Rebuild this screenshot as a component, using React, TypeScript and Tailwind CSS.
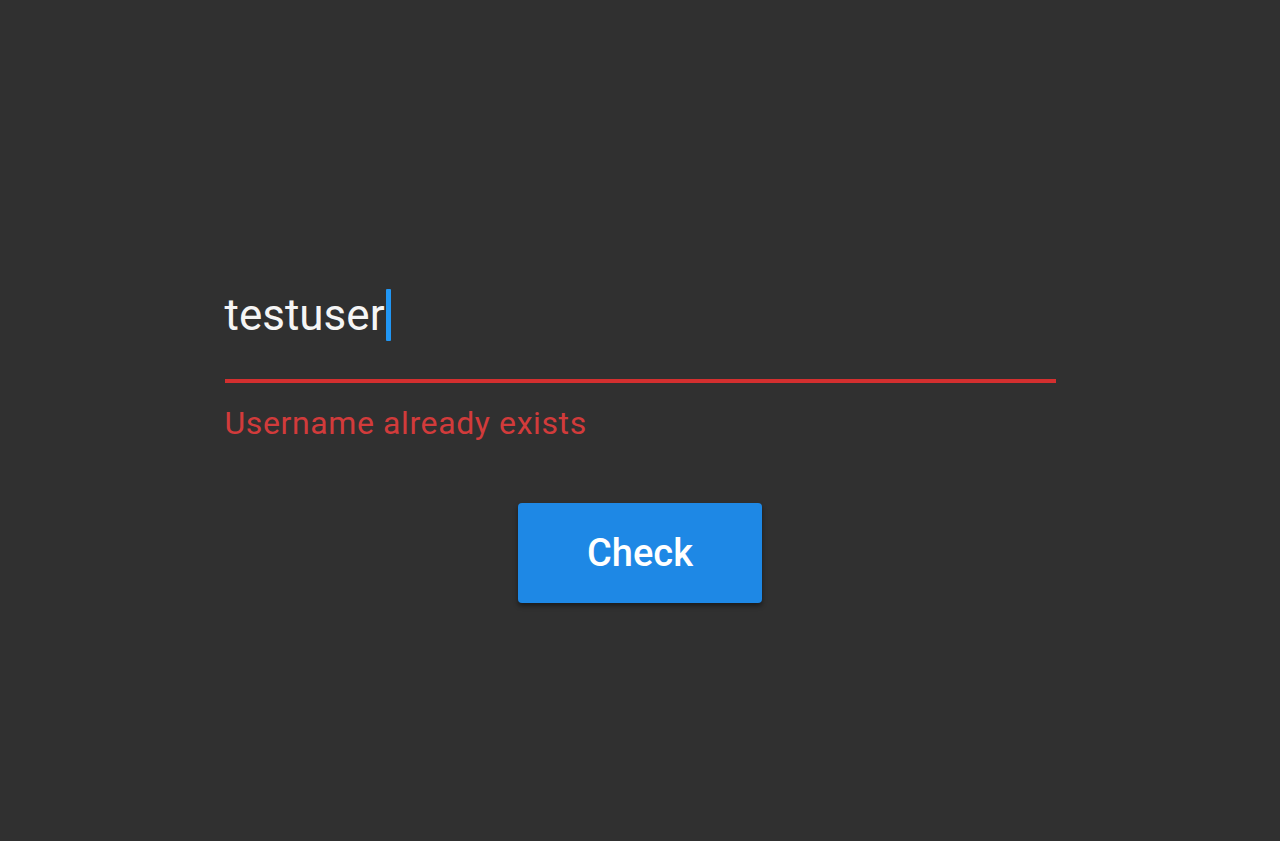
export default function App() {
  return (
    <div className="flex min-h-[841px] w-full flex-col bg-[#303030] font-['Roboto',sans-serif]">
      <div className="mx-auto mt-[284px] w-[831px]">
        <div className="flex h-[62px] items-center">
          <span className="text-[44px] leading-none text-[#f5f5f5]">testuser</span>
          <span className="ml-[1px] h-[52px] w-[5px] rounded-[1px] bg-[#2196f3]" />
        </div>
        <div className="mt-[33px] h-[4px] w-full bg-[#d32f2f]" />
        <div className="mt-[24px] text-[32px] leading-none tracking-[0.6px] text-[#d23b3b]">
          Username already exists
        </div>
      </div>
      <div className="mt-[64px] flex justify-center">
        <button className="h-[100px] w-[244px] rounded-[4px] bg-[#1e88e5] text-[38px] font-medium text-white shadow-[0_3px_5px_rgba(0,0,0,0.45)]">
          Check
        </button>
      </div>
    </div>
  );
}
